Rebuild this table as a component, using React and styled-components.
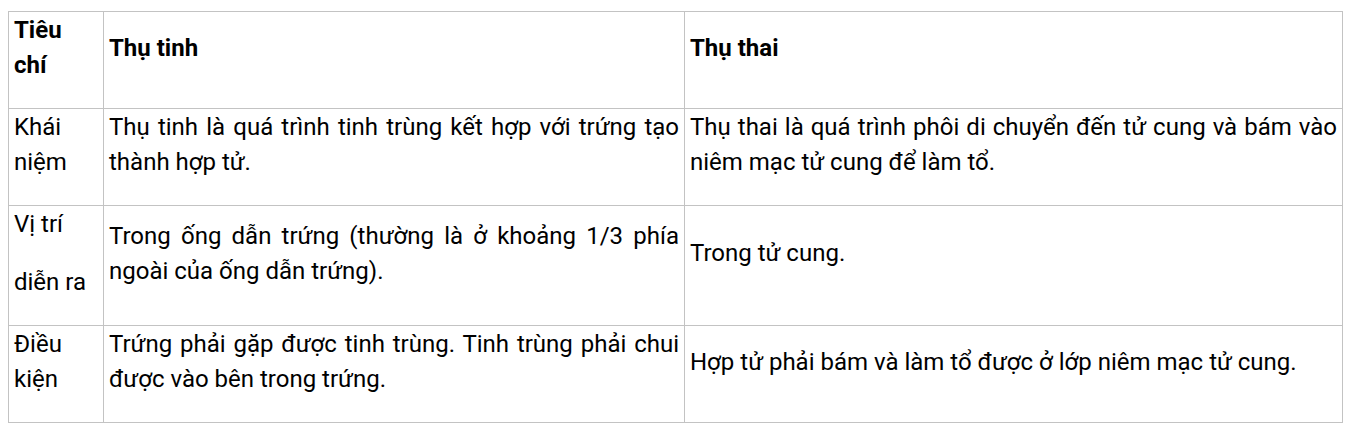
import styled, { createGlobalStyle } from "styled-components";

const GlobalStyle = createGlobalStyle`
  body {
    margin: 8px;
    background: #fff;
    font-family: Roboto, "Liberation Sans", Arial, sans-serif;
    color: #000;
  }
`;

const Table = styled.table`
  width: 1334px;
  margin-top: 3px;
  border-collapse: collapse;
  table-layout: fixed;
  font-size: 24px;
`;

const Col = styled.col`
  width: ${(p) => p.$w}px;
`;

const Cell = styled.td`
  border: 1px solid #c3c3c3;
  padding: 1px 5px 2px;
  vertical-align: middle;
  text-align: ${(p) => (p.$justify ? "justify" : "left")};
  font-weight: ${(p) => (p.$head ? 700 : 400)};
`;

const Para = styled.p`
  margin: 0 0 23px;
  line-height: 35px;
`;

const rows = [
  { head: true, cells: [["Tiêu chí"], ["Thụ tinh"], ["Thụ thai"]] },
  {
    cells: [
      ["Khái niệm"],
      ["Thụ tinh là quá trình tinh trùng kết hợp với trứng tạo thành hợp tử."],
      ["Thụ thai là quá trình phôi di chuyển đến tử cung và bám vào niêm mạc tử cung để làm tổ."],
    ],
  },
  {
    cells: [
      ["Vị trí", "diễn ra"],
      ["Trong ống dẫn trứng (thường là ở khoảng 1/3 phía ngoài của ống dẫn trứng)."],
      ["Trong tử cung."],
    ],
  },
  {
    cells: [
      ["Điều kiện"],
      ["Trứng phải gặp được tinh trùng. Tinh trùng phải chui được vào bên trong trứng."],
      ["Hợp tử phải bám và làm tổ được ở lớp niêm mạc tử cung."],
    ],
  },
];

export default function App() {
  return (
    <>
      <GlobalStyle />
      <Table>
        <colgroup>
          <Col $w={95} />
          <Col $w={581} />
          <Col $w={658} />
        </colgroup>
        <tbody>
          {rows.map((row, i) => (
            <tr key={i}>
              {row.cells.map((paras, j) => (
                <Cell key={j} $head={row.head} $justify={j > 0}>
                  {paras.map((t, k) => (
                    <Para key={k}>{t}</Para>
                  ))}
                </Cell>
              ))}
            </tr>
          ))}
        </tbody>
      </Table>
    </>
  );
}
